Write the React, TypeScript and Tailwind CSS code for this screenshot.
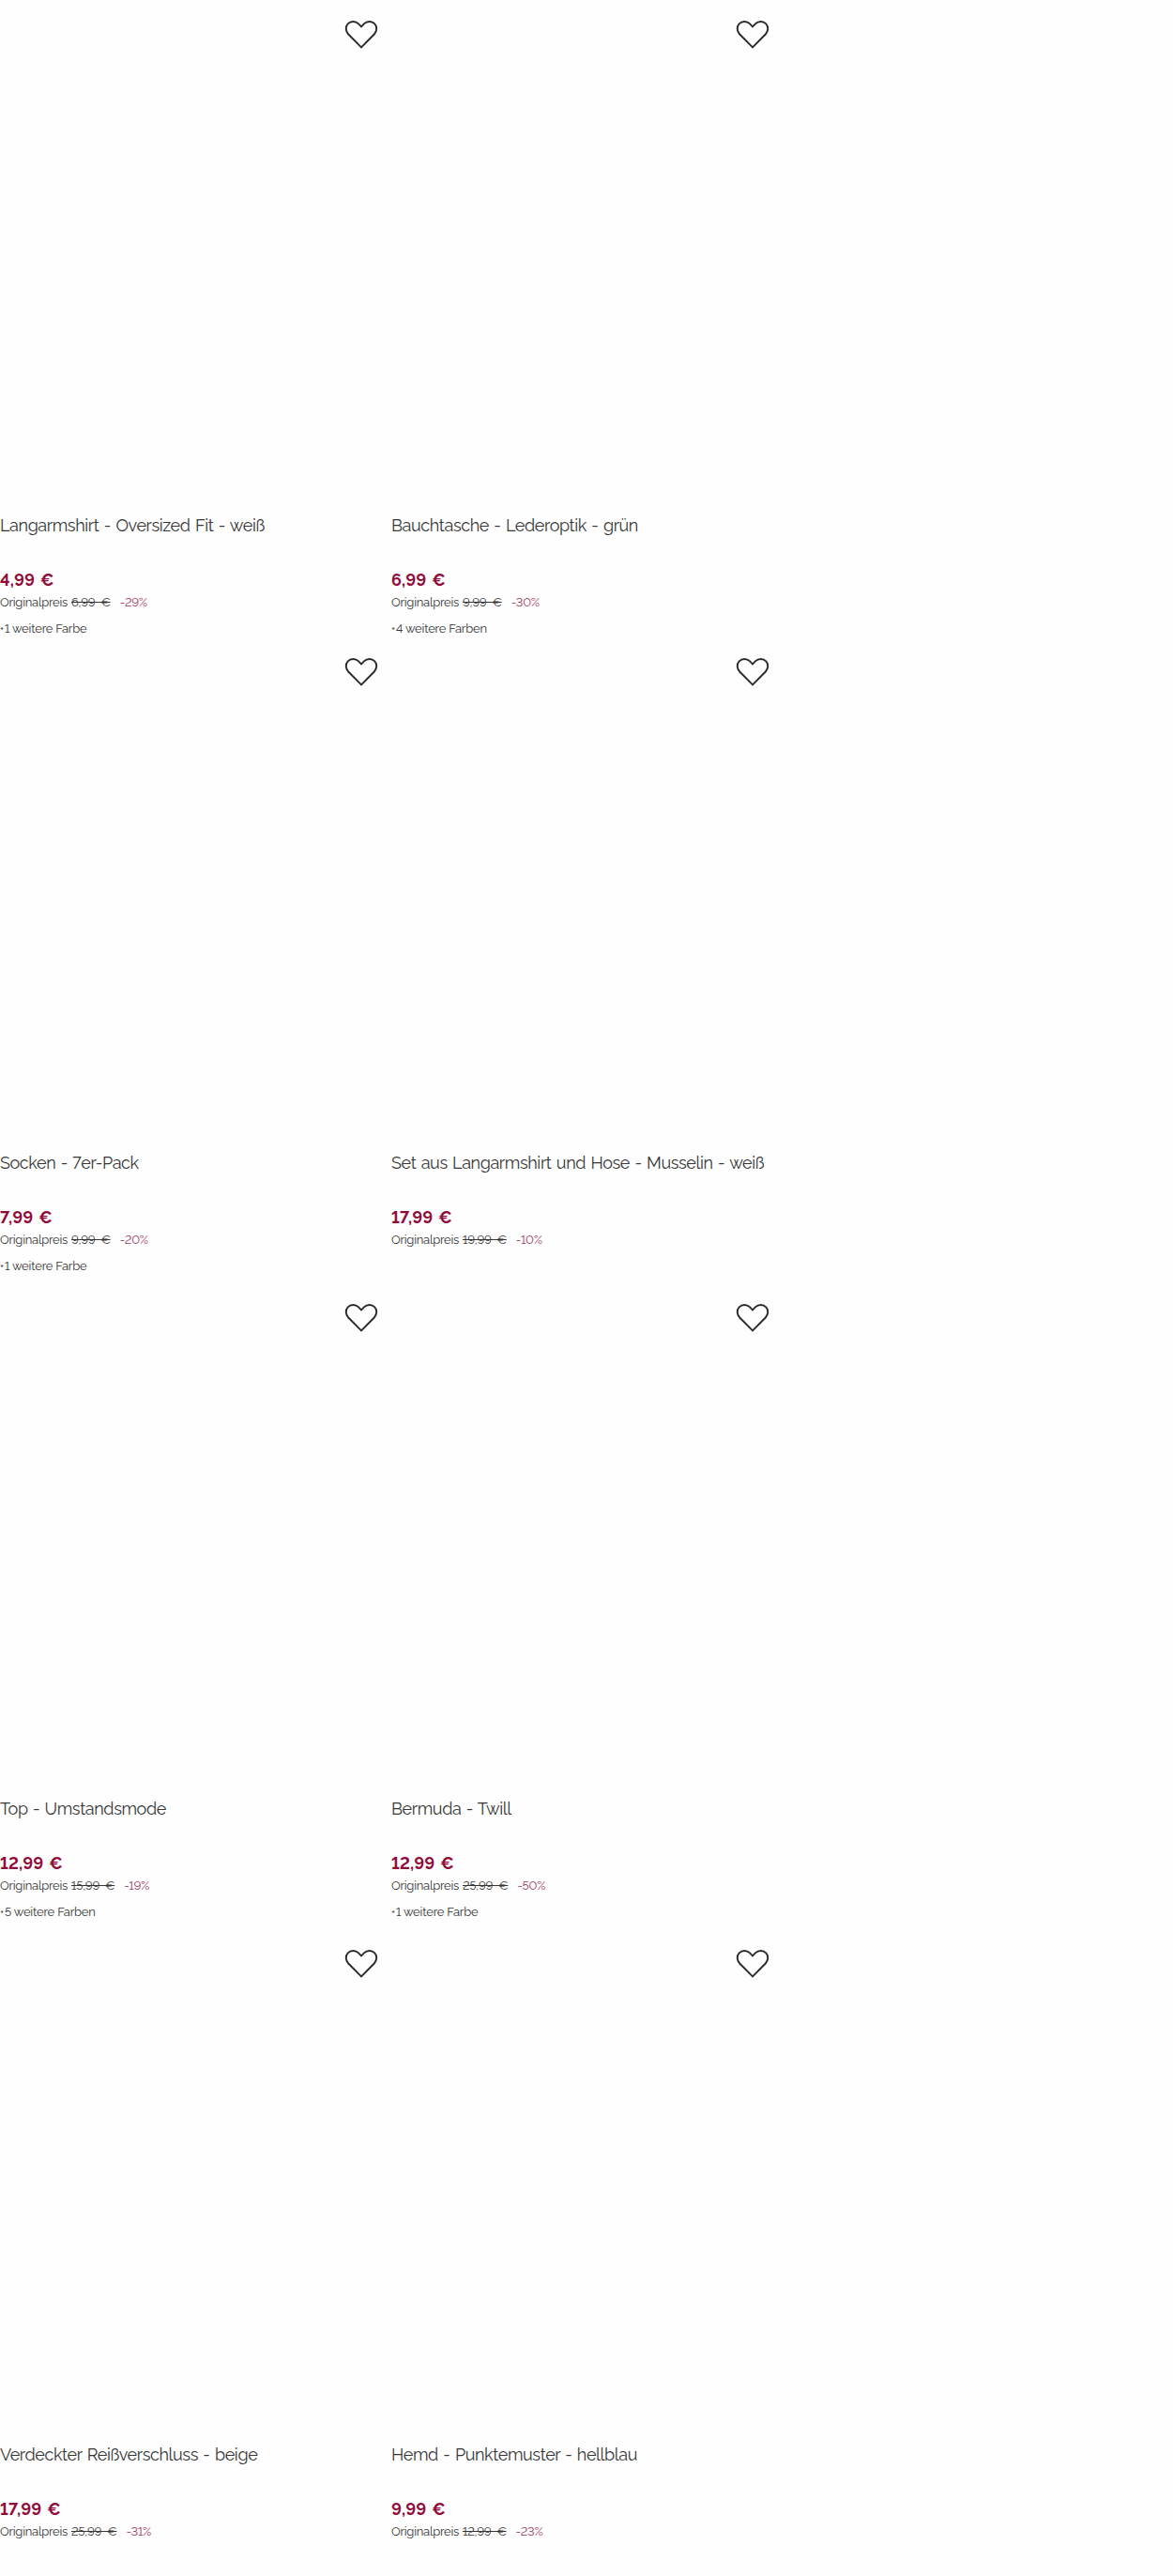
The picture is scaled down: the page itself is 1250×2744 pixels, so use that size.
type Product = {
  title: string;
  price: string;
  original: string;
  discount: string;
  colors?: string;
};

const rows: { height: string; items: Product[] }[] = [
  {
    height: 'h-[679px]',
    items: [
      { title: 'Langarmshirt - Oversized Fit - weiß', price: '4,99 €', original: '6,99 €', discount: '-29%', colors: '1 weitere Farbe' },
      { title: 'Bauchtasche - Lederoptik - grün', price: '6,99 €', original: '9,99 €', discount: '-30%', colors: '4 weitere Farben' },
    ],
  },
  {
    height: 'h-[688px]',
    items: [
      { title: 'Socken - 7er-Pack', price: '7,99 €', original: '9,99 €', discount: '-20%', colors: '1 weitere Farbe' },
      { title: 'Set aus Langarmshirt und Hose - Musselin - weiß', price: '17,99 €', original: '19,99 €', discount: '-10%' },
    ],
  },
  {
    height: 'h-[688px]',
    items: [
      { title: 'Top - Umstandsmode', price: '12,99 €', original: '15,99 €', discount: '-19%', colors: '5 weitere Farben' },
      { title: 'Bermuda - Twill', price: '12,99 €', original: '25,99 €', discount: '-50%', colors: '1 weitere Farbe' },
    ],
  },
  {
    height: 'h-[688px]',
    items: [
      { title: 'Verdeckter Reißverschluss - beige', price: '17,99 €', original: '25,99 €', discount: '-31%' },
      { title: 'Hemd - Punktemuster - hellblau', price: '9,99 €', original: '12,99 €', discount: '-23%' },
    ],
  },
];

function HeartIcon() {
  return (
    <svg width="36" height="32" viewBox="0 0 36 32" fill="none" stroke="#2a2a2a" strokeWidth="1.9">
      <path d="M18 29.3 L4.2 15.5 C1.2 12.4 .9 7.4 3.7 4.4 C6.7 1.2 11.8 1.2 14.8 4.2 L18 7.5 L21.2 4.2 C24.2 1.2 29.3 1.2 32.3 4.4 C35.1 7.4 34.8 12.4 31.8 15.5 Z" />
    </svg>
  );
}

function ProductCard({ title, price, original, discount, colors }: Product) {
  return (
    <article className="w-[417px]">
      <div className="flex h-[546px] items-start justify-end pt-[21px] pr-[14px]">
        <button aria-label={title}>
          <HeartIcon />
        </button>
      </div>
      <h3 className="h-[58px] text-[18px] leading-7 tracking-[-0.39px] whitespace-nowrap [word-spacing:1.2px]">{title}</h3>
      <p className="text-[18px] leading-[27px] font-bold text-[#8f0d3a] tracking-[0.1px] [word-spacing:1.5px]">{price}</p>
      <div className="flex h-[21px] items-center text-[13px] leading-5 tracking-[-0.25px] whitespace-nowrap">
        <span className="w-[76px]">Originalpreis</span>
        <s className="mr-[10px] [word-spacing:3px]">{original}</s>
        <span className="text-[#a03a5c]">{discount}</span>
      </div>
      {colors && (
        <p className="mt-2 flex text-[13px] leading-5 tracking-[-0.2px]">
          <span className="w-[5px] text-[10px] font-medium">+</span>
          {colors}
        </p>
      )}
    </article>
  );
}

export default function App() {
  return (
    <main className="h-[2744px] w-full overflow-hidden bg-[#fefefe] font-['Raleway','Lato',sans-serif] lining-nums text-[#363636]">
      {rows.map((row, i) => (
        <section key={i} className={`flex ${row.height}`}>
          {row.items.map((item) => (
            <ProductCard key={item.title} {...item} />
          ))}
        </section>
      ))}
    </main>
  );
}
